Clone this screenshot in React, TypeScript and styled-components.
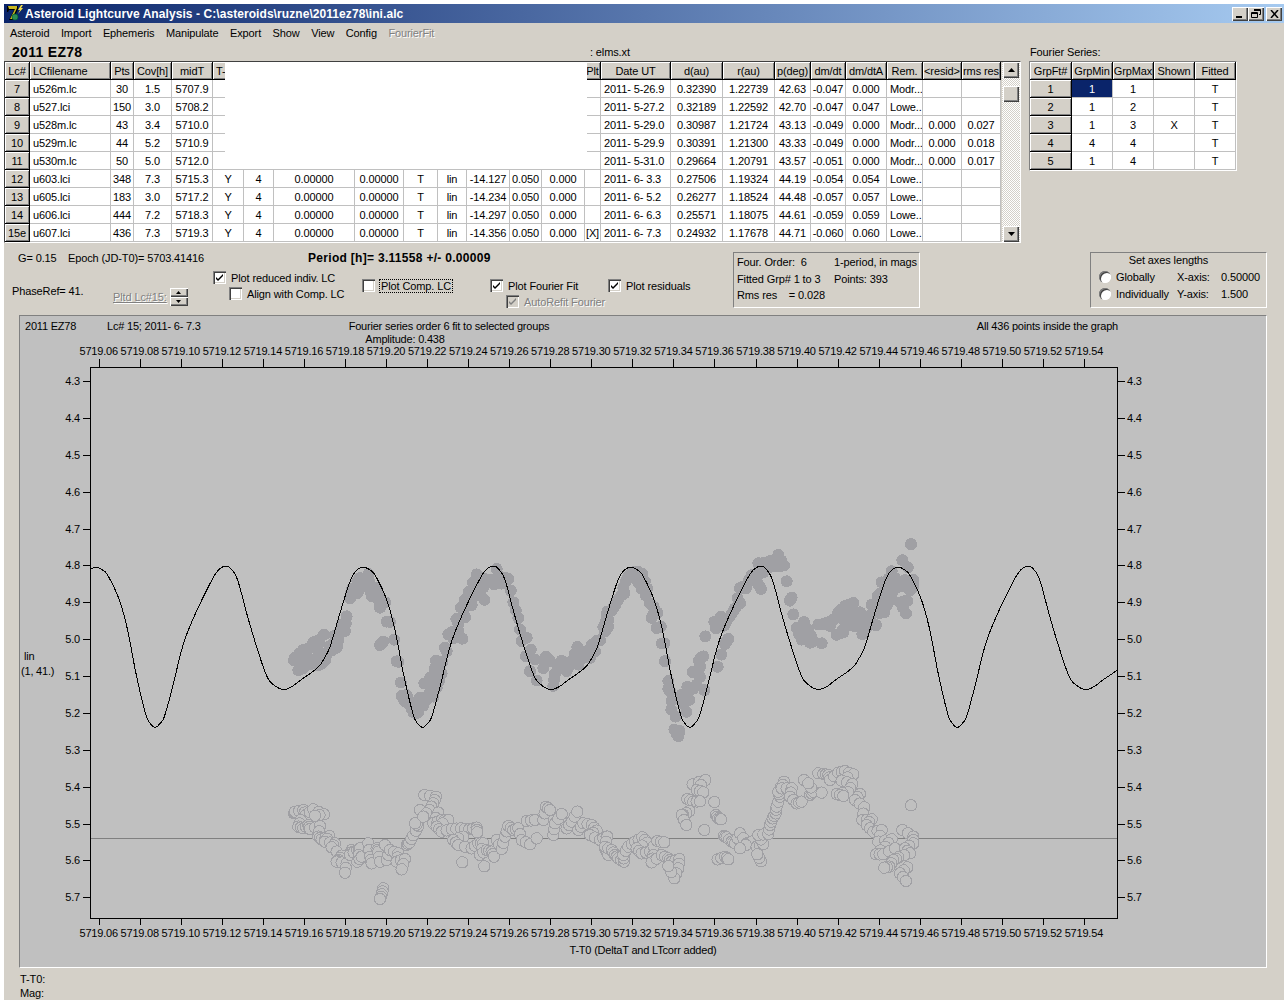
import styled, { createGlobalStyle, css } from 'styled-components';

const FONT = '"Liberation Sans", Arial, sans-serif';
const FACE = '#d4d0c8';
const PLOT_BG = '#c0c0c0';
const DOT = '#a0a0a4';

const GlobalStyle = createGlobalStyle`
  html, body {
    margin: 0;
    padding: 0;
    background: #fff;
  }
  body {
    font-family: ${FONT};
    font-size: 11px;
    letter-spacing: -0.12px;
    color: #000;
  }
`;

const Desktop = styled.div`
  padding: 4px 4px 0 4px;
  width: 1280px;
  height: 1000px;
`;

const Window = styled.div`
  display: flex;
  flex-direction: column;
  background: ${FACE};
  height: 997px;
  border-bottom: 1px solid #fff;
  box-sizing: border-box;
`;

const TitleBar = styled.div`
  display: flex;
  align-items: center;
  height: 19px;
  flex: none;
  background: linear-gradient(90deg, #0a246a 0%, #a6caf0 100%);
  padding: 0 2px 0 2px;
`;

const TitleText = styled.span`
  margin-left: 1px;
  color: #fff;
  font-weight: 700;
  font-size: 12px;
  letter-spacing: 0.07px;
  white-space: pre;
  flex: 1;
`;

const CaptionButton = styled.button<{ $gap?: number }>`
  width: 16px;
  height: 14px;
  padding: 0;
  margin-left: ${p => p.$gap ?? 0}px;
  border: 0;
  background: ${FACE};
  box-shadow: inset 1px 1px 0 #fff, inset -1px -1px 0 #404040, inset -2px -2px 0 #808080;
  display: flex;
  align-items: center;
  justify-content: center;
`;

const MenuBar = styled.div`
  display: flex;
  align-items: center;
  gap: 11.5px;
  height: 20px;
  flex: none;
  padding: 0 0 1px 6px;
  box-sizing: border-box;
`;

const MenuItem = styled.span<{ $off?: boolean }>`
  ${p => p.$off && css`
    color: #808080;
    text-shadow: 1px 1px 0 #fff;
  `}
`;

const CaptionRow = styled.div`
  display: grid;
  grid-template-columns: 578px 440px auto;
  align-items: center;
  height: 18px;
  flex: none;
  padding-left: 8px;
`;

const AsteroidName = styled.span`
  font-weight: 700;
  font-size: 14px;
  letter-spacing: 0.3px;
`;

const GridsRow = styled.div`
  display: flex;
  align-items: flex-start;
  height: 182px;
  flex: none;
`;

const GridFrame = styled.div`
  position: relative;
  display: flex;
  border-top: 1px solid #404040;
  border-left: 1px solid #404040;
  border-right: 1px solid #fff;
  border-bottom: 1px solid #fff;
`;

const DataGrid = styled.div<{ $cols: number[] }>`
  display: grid;
  grid-template-columns: ${p => p.$cols.map(c => `${c}px`).join(' ')};
  grid-auto-rows: 18px;
`;

const HeadCell = styled.div`
  box-sizing: border-box;
  background: ${FACE};
  border-right: 1px solid #000;
  border-bottom: 1px solid #000;
  box-shadow: inset 1px 1px 0 #fff, inset -1px -1px 0 #808080;
  display: flex;
  align-items: center;
  justify-content: center;
  white-space: nowrap;
  overflow: hidden;
`;

const LeftHeadCell = styled(HeadCell)`
  justify-content: flex-start;
  padding-left: 3px;
`;

const BodyCell = styled.div<{ $left?: boolean; $selected?: boolean }>`
  box-sizing: border-box;
  background: ${p => (p.$selected ? '#0a246a' : '#fff')};
  color: ${p => (p.$selected ? '#fff' : '#000')};
  border-right: 1px solid #c0c0c0;
  border-bottom: 1px solid #c0c0c0;
  display: flex;
  align-items: center;
  justify-content: ${p => (p.$left ? 'flex-start' : 'center')};
  padding-left: ${p => (p.$left ? '3px' : '0')};
  white-space: pre;
  overflow: hidden;
`;

const HiddenPatch = styled.div`
  position: absolute;
  left: 220px;
  top: 0;
  width: 362px;
  height: 107px;
  background: #fff;
`;

const ScrollBar = styled.div`
  display: flex;
  flex-direction: column;
  align-items: center;
  width: 18px;
  margin-left: 1px;
  background: repeating-conic-gradient(#fff 0 25%, ${FACE} 0 50%) 0 0 / 2px 2px;
`;

const ScrollButton = styled.div`
  box-sizing: border-box;
  width: 16px;
  height: 16px;
  background: ${FACE};
  box-shadow: inset 1px 1px 0 #fff, inset -1px -1px 0 #404040, inset -2px -2px 0 #808080;
  display: flex;
  align-items: center;
  justify-content: center;
  flex: none;
`;

const ScrollThumb = styled(ScrollButton)`
  margin-top: 8px;
`;

const ScrollGap = styled.div`
  flex: 1;
`;

const FourierFrame = styled.div`
  margin-left: 8px;
  border-top: 1px solid #808080;
  border-left: 1px solid #808080;
  border-right: 1px solid #fff;
  border-bottom: 1px solid #fff;
`;

const ControlBand = styled.div`
  display: flex;
  align-items: flex-start;
  height: 72px;
  flex: none;
`;

const ControlsLeft = styled.div`
  width: 729px;
  flex: none;
  display: flex;
  flex-direction: column;
`;

const TopInfo = styled.div`
  display: grid;
  grid-template-columns: 50px 240px auto;
  height: 27px;
  align-items: center;
  padding: 3px 0 0 14px;
  box-sizing: border-box;
`;

const PeriodText = styled.span`
  font-weight: 700;
  font-size: 12px;
  letter-spacing: 0.3px;
`;

const Options = styled.div`
  display: grid;
  grid-template-columns: 101px 100px 149px 128px 118px auto;
  padding-left: 8px;
`;

const OptionCol = styled.div<{ $top: number }>`
  display: flex;
  flex-direction: column;
  gap: 3px;
  padding-top: ${p => p.$top}px;
`;

const OptionLine = styled.label<{ $indent?: number; $off?: boolean }>`
  display: flex;
  align-items: center;
  height: 13px;
  gap: 5px;
  margin-left: ${p => p.$indent ?? 0}px;
  white-space: nowrap;
  ${p => p.$off && css`
    color: #808080;
    text-shadow: 1px 1px 0 #fff;
  `}
`;

const CheckFace = styled.span<{ $off?: boolean }>`
  box-sizing: border-box;
  width: 13px;
  height: 13px;
  flex: none;
  background: ${p => (p.$off ? FACE : '#fff')};
  box-shadow: inset 1px 1px 0 #808080, inset 2px 2px 0 #404040, inset -1px -1px 0 #fff, inset -2px -2px 0 ${FACE};
  display: flex;
  align-items: center;
  justify-content: center;
`;

const FocusText = styled.span`
  outline: 1px dotted #000;
  padding: 0 1px;
`;

const SpinWrap = styled.div`
  display: flex;
  align-items: center;
  gap: 3px;
  padding-top: 15px;
`;

const DisabledLabel = styled.span`
  color: #808080;
  text-shadow: 1px 1px 0 #fff;
  text-decoration: underline;
  white-space: nowrap;
`;

const SpinColumn = styled.div`
  display: flex;
  flex-direction: column;
`;

const SpinButton = styled(ScrollButton)`
  width: 18px;
  height: 9px;
`;

const PhaseLabel = styled.span`
  padding-top: 15px;
`;

const BevelBox = styled.div<{ $width: number; $left: number }>`
  box-sizing: border-box;
  width: ${p => p.$width}px;
  height: 56px;
  margin: 9px 0 0 ${p => p.$left}px;
  border-top: 1px solid #808080;
  border-left: 1px solid #808080;
  border-right: 1px solid #fff;
  border-bottom: 1px solid #fff;
  flex: none;
`;

const FitInfo = styled.div`
  display: grid;
  grid-template-columns: 97px auto;
  grid-auto-rows: 16.5px;
  align-items: center;
  padding: 1px 0 0 3px;
  white-space: pre;
`;

const AxesTitle = styled.div`
  text-align: center;
  padding: 0 20px 0 0;
  line-height: 14px;
`;

const AxesRows = styled.div`
  display: grid;
  grid-template-columns: 78px 44px auto;
  grid-auto-rows: 17px;
  align-items: center;
  padding: 1px 0 0 8px;
`;

const RadioLine = styled.label`
  display: flex;
  align-items: center;
  gap: 5px;
`;

const RadioDot = styled.span`
  width: 12px;
  height: 12px;
  border-radius: 50%;
  background: #fff;
  box-shadow: inset 1px 1px 0 #808080, inset 2px 2px 0 #404040, inset -1px -1px 0 #fff;
  flex: none;
`;

const PlotPanel = styled.div`
  box-sizing: border-box;
  width: 1248px;
  height: 653px;
  margin-left: 15px;
  flex: none;
  background: ${PLOT_BG};
  border-top: 1px solid #808080;
  border-left: 1px solid #808080;
  border-right: 1px solid #fff;
  border-bottom: 1px solid #fff;
`;

const PlotSvg = styled.svg`
  display: block;
  font-family: ${FONT};
  font-size: 11px;
  letter-spacing: -0.2px;
`;

const StatusLines = styled.div`
  display: flex;
  flex-direction: column;
  padding: 4px 0 0 16px;
  line-height: 14px;
`;

// one curve period, traced off the plot (page pixels)
const PERIOD = 267.4;
const KNOTS: [number, number][] = [
  [283.3, 689.5], [292, 686.5], [300, 680.5], [318.3, 667], [325, 657], [330, 646.7], [340, 613],
  [350, 581.7], [356, 571], [363.3, 567.3], [370, 570], [375, 575], [386.7, 600], [395, 630],
  [403.3, 673], [413.3, 715], [418, 724], [422.7, 727.3], [427, 724], [431.7, 716.7], [440, 686.7],
  [450, 646.7], [460, 620], [476.7, 585], [485, 571], [493.3, 566], [499, 569.5], [505, 580],
  [514, 613], [524, 646.7], [534.5, 676.7], [542, 685.5],
];

const allKnots: [number, number][] = [];
for (let k = -1; k <= 3; k++) {
  KNOTS.forEach(([x, y]) => allKnots.push([x + k * PERIOD, y]));
}

const curveY = (x: number) => {
  let i = 1;
  while (i < allKnots.length - 3 && allKnots[i + 1][0] < x) i++;
  const [x0, y0] = allKnots[i];
  const [x1, y1] = allKnots[i + 1];
  const m0 = (y1 - allKnots[i - 1][1]) / (x1 - allKnots[i - 1][0]);
  const m1 = (allKnots[i + 2][1] - y0) / (allKnots[i + 2][0] - x0);
  const h = x1 - x0;
  const t = (x - x0) / h;
  const t2 = t * t;
  const t3 = t2 * t;
  return (2 * t3 - 3 * t2 + 1) * y0 + (t3 - 2 * t2 + t) * h * m0 + (-2 * t3 + 3 * t2) * y1 + (t3 - t2) * h * m1;
};

const curvePoints = (() => {
  const pts: string[] = [];
  for (let x = 91; x <= 1117; x++) pts.push(`${x},${curveY(x).toFixed(1)}`);
  return pts.join(' ');
})();

const RES_LINE = 838.3;

// residual circles read from the plot, as [x, y] in two crops at 3x
const RES_A = [
  72,160, 75,155, 100,150, 108,165, 130,148, 162,163, 135,167, 92,180, 85,200, 100,205, 115,195, 120,207, 150,198,
  145,230, 155,238, 178,228, 165,245, 195,250, 185,262, 215,287, 205,300, 200,305, 230,310, 225,338, 245,270, 240,285,
  262,270, 270,265, 262,305, 275,290, 295,250, 300,290, 305,310, 320,265, 325,275, 330,305, 345,255, 350,300, 360,270,
  385,280, 380,305, 405,297, 395,328, 340,385, 335,403, 330,417, 410,255, 418,248, 430,226, 445,198, 435,190, 450,150,
  463,105, 498,110, 490,130, 478,150, 460,170, 505,158, 490,190, 515,180, 535,180, 500,200, 515,215, 545,207, 573,205,
  597,208, 620,203, 622,217, 580,230, 550,240, 565,255, 605,265, 625,250, 640,250, 630,285, 650,270, 665,275, 672,290,
  577,307, 643,319, 680,240, 695,267, 705,230, 715,198, 730,210, 745,205, 755,240, 780,253, 770,183, 795,180, 800,235,
  820,180, 828,140, 840,150, 850,225, 855,190, 875,162, 890,205, 905,185, 922,155, 925,210, 940,190, 965,195, 980,212,
  960,225, 990,240, 1010,230, 1005,265, 1015,285,
];
const RES_B = [
  22,230, 15,260, 35,270, 45,285, 55,295, 72,305, 70,285, 85,260, 105,245, 127,232, 142,248, 110,265, 125,280, 150,275,
  172,243, 193,247, 160,285, 155,307, 185,285, 205,295, 215,305, 238,297, 235,325, 223,355, 205,318, 278,73, 316,60,
  290,90, 310,97, 262,117, 280,125, 300,124, 343,126, 268,153, 250,165, 245,165, 259,195, 348,165, 355,175, 363,178,
  313,210, 372,228, 380,232, 395,245, 405,250, 420,220, 440,250, 455,245, 420,265, 470,260, 490,252, 475,225, 505,222,
  510,195, 518,175, 527,160, 530,138, 530,140, 540,110, 535,95, 552,65, 545,85, 575,85, 570,110, 590,130, 605,125,
  612,60, 630,105, 640,95, 625,70, 655,40, 665,98, 670,42, 685,45, 690,60, 715,38, 735,33, 760,43, 725,62, 757,72,
  745,97, 710,102, 730,108, 780,102, 765,120, 793,142, 787,180, 815,178, 800,195, 820,215, 845,210, 835,245, 875,238,
  855,260, 828,283, 850,283, 885,265, 907,210, 940,230, 940,250, 915,265, 930,280, 895,292, 880,300, 868,320, 853,323,
  922,322, 900,340, 918,363, 933,136, 353,298, 375,290, 385,298, 483,304, 472,283,
];

const toPage = (raw: number[], baseX: number) => {
  const out: [number, number][] = [];
  for (let i = 0; i < raw.length; i += 2) {
    out.push([baseX + raw[i] / 3, 760 + raw[i + 1] / 3]);
  }
  return out;
};

// fill in points between close neighbours, the plot has 436 of them
const thicken = (pts: [number, number][]) => {
  const out: [number, number][] = [];
  pts.forEach((p, i) => {
    out.push(p);
    const n = pts[i + 1];
    if (n && Math.hypot(n[0] - p[0], n[1] - p[1]) < 14) {
      out.push([(p[0] + n[0]) / 2, (p[1] + n[1]) / 2]);
    }
  });
  return out;
};

const residuals = thicken([...toPage(RES_A, 270), ...toPage(RES_B, 600)]);
const observed = residuals.map(([x, y]) => [x, curveY(x) + y - RES_LINE]);

const X_LABELS = Array.from({ length: 25 }, (_, i) => ({
  x: 98.7 + i * 41.05,
  label: (5719.06 + i * 0.02).toFixed(2),
}));
const Y_LABELS = Array.from({ length: 15 }, (_, i) => ({
  y: 381 + i * 36.88,
  label: (4.3 + i * 0.1).toFixed(1),
}));

const MAIN_COLS = [25, 81, 23, 38, 41, 31, 30, 81, 49, 34, 29, 43, 32, 43, 16, 70, 52, 52, 36, 35, 41, 36, 39, 39];
const MAIN_HEAD = ['Lc#', 'LCfilename', 'Pts', 'Cov[h]', 'midT', 'T-', '', '', '', '', '', '', '', '', 'Plt', 'Date UT', 'd(au)', 'r(au)', 'p(deg)', 'dm/dt', 'dm/dtA', 'Rem.', '<resid>', 'rms res'];
const LEFT_HEADS = [1, 5];

const early = (lc: string, file: string, pts: string, cov: string, mid: string, rest: string[]) => [
  lc, file, pts, cov, mid, '', '', '', '', '', '', '', '', '', '', ...rest,
];
const late = (lc: string, file: string, pts: string, cov: string, mid: string, inst: string, mark: string, rest: string[]) => [
  lc, file, pts, cov, mid, 'Y', '4', '0.00000', '0.00000', 'T', 'lin', inst, '0.050', '0.000', mark, ...rest,
];

const MAIN_ROWS = [
  early('7', 'u526m.lc', '30', '1.5', '5707.9', ['2011- 5-26.9', '0.32390', '1.22739', '42.63', '-0.047', '0.000', 'Modr...', '', '']),
  early('8', 'u527.lci', '150', '3.0', '5708.2', ['2011- 5-27.2', '0.32189', '1.22592', '42.70', '-0.047', '0.047', 'Lowe..', '', '']),
  early('9', 'u528m.lc', '43', '3.4', '5710.0', ['2011- 5-29.0', '0.30987', '1.21724', '43.13', '-0.049', '0.000', 'Modr...', '0.000', '0.027']),
  early('10', 'u529m.lc', '44', '5.2', '5710.9', ['2011- 5-29.9', '0.30391', '1.21300', '43.33', '-0.049', '0.000', 'Modr...', '0.000', '0.018']),
  early('11', 'u530m.lc', '50', '5.0', '5712.0', ['2011- 5-31.0', '0.29664', '1.20791', '43.57', '-0.051', '0.000', 'Modr...', '0.000', '0.017']),
  late('12', 'u603.lci', '348', '7.3', '5715.3', '-14.127', '', ['2011- 6- 3.3', '0.27506', '1.19324', '44.19', '-0.054', '0.054', 'Lowe..', '', '']),
  late('13', 'u605.lci', '183', '3.0', '5717.2', '-14.234', '', ['2011- 6- 5.2', '0.26277', '1.18524', '44.48', '-0.057', '0.057', 'Lowe..', '', '']),
  late('14', 'u606.lci', '444', '7.2', '5718.3', '-14.297', '', ['2011- 6- 6.3', '0.25571', '1.18075', '44.61', '-0.059', '0.059', 'Lowe..', '', '']),
  late('15e', 'u607.lci', '436', '7.3', '5719.3', '-14.356', '[X]', ['2011- 6- 7.3', '0.24932', '1.17678', '44.71', '-0.060', '0.060', 'Lowe..', '', '']),
];
// filename, Rem. and the date sit at the cell's left edge
const LEFT_COLUMNS = [1, 15, 21];

const FOURIER_COLS = [42, 41, 41, 41, 41];
const FOURIER_HEAD = ['GrpFt#', 'GrpMin', 'GrpMax', 'Shown', 'Fitted'];
const FOURIER_ROWS = [
  ['1', '1', '1', '', 'T'],
  ['2', '1', '2', '', 'T'],
  ['3', '1', '3', 'X', 'T'],
  ['4', '4', '4', '', 'T'],
  ['5', '1', '4', '', 'T'],
];

const AppIcon = () => (
  <svg width="18" height="17" viewBox="0 0 18 17">
    <path d="M1 1h11v3L7 15H3L8 5H3L2 7H1z" fill="#000" />
    <path d="M2 1h9v2L6 14H4L9 4H3z" fill="#c8b820" />
    <circle cx="9" cy="12" r="3" fill="#2e8b57" stroke="#063" strokeWidth="0.7" />
    <path d="M15 0l-3 5h2l-2 4 5-6h-2l2-3z" fill="#f4e04a" />
  </svg>
);

const Tick = ({ color = '#000' }: { color?: string }) => (
  <svg width="9" height="9" viewBox="0 0 9 9">
    <path d="M1 4l2 2 5-5v2L3 8 1 6z" fill={color} />
  </svg>
);

const Check = ({ checked, off }: { checked?: boolean; off?: boolean }) => (
  <CheckFace $off={off}>{checked && <Tick color={off ? '#808080' : '#000'} />}</CheckFace>
);

const Arrow = ({ up, size = 7 }: { up?: boolean; size?: number }) => (
  <svg width={size} height={Math.ceil(size / 2)} viewBox="0 0 7 4">
    <path d={up ? 'M3.5 0L7 4H0z' : 'M0 0h7L3.5 4z'} fill="#000" />
  </svg>
);

const App = () => (
  <>
    <GlobalStyle />
    <Desktop>
      <Window>
        <TitleBar>
          <AppIcon />
          <TitleText>{'Asteroid Lightcurve Analysis - C:\\asteroids\\ruzne\\2011ez78\\ini.alc'}</TitleText>
          <CaptionButton>
            <svg width="8" height="9" viewBox="0 0 8 9"><path d="M0 7h6v2H0z" fill="#000" /></svg>
          </CaptionButton>
          <CaptionButton>
            <svg width="10" height="9" viewBox="0 0 10 9">
              <path d="M3 .5h6.500v5H8M.5 3.500h6v5h-6zM3 1.500h6.500M.5 4.500h6" fill="none" stroke="#000" />
            </svg>
          </CaptionButton>
          <CaptionButton $gap={2}>
            <svg width="9" height="8" viewBox="0 0 9 8">
              <path d="M1 0l7 8M8 0L1 8" fill="none" stroke="#000" strokeWidth="1.500" />
            </svg>
          </CaptionButton>
        </TitleBar>

        <MenuBar>
          {['Asteroid', 'Import', 'Ephemeris', 'Manipulate', 'Export', 'Show', 'View', 'Config'].map(m => (
            <MenuItem key={m}>{m}</MenuItem>
          ))}
          <MenuItem $off>FourierFit</MenuItem>
        </MenuBar>

        <CaptionRow>
          <AsteroidName>2011 EZ78</AsteroidName>
          <span>: elms.xt</span>
          <span>Fourier Series:</span>
        </CaptionRow>

        <GridsRow>
          <GridFrame>
            <DataGrid $cols={MAIN_COLS}>
              {MAIN_HEAD.map((h, i) =>
                LEFT_HEADS.includes(i) ? <LeftHeadCell key={i}>{h}</LeftHeadCell> : <HeadCell key={i}>{h}</HeadCell>
              )}
              {MAIN_ROWS.map(row =>
                row.map((v, i) =>
                  i === 0 ? (
                    <HeadCell key={`${row[0]}-${i}`}>{v}</HeadCell>
                  ) : (
                    <BodyCell key={`${row[0]}-${i}`} $left={LEFT_COLUMNS.includes(i)}>{v}</BodyCell>
                  )
                )
              )}
            </DataGrid>
            <HiddenPatch />
            <ScrollBar>
              <ScrollButton><Arrow up /></ScrollButton>
              <ScrollThumb />
              <ScrollGap />
              <ScrollButton><Arrow /></ScrollButton>
            </ScrollBar>
          </GridFrame>

          <FourierFrame>
            <DataGrid $cols={FOURIER_COLS}>
              {FOURIER_HEAD.map(h => <HeadCell key={h}>{h}</HeadCell>)}
              {FOURIER_ROWS.map((row, r) =>
                row.map((v, i) =>
                  i === 0 ? (
                    <HeadCell key={`${r}-${i}`}>{v}</HeadCell>
                  ) : (
                    <BodyCell key={`${r}-${i}`} $selected={r === 0 && i === 1}>{v}</BodyCell>
                  )
                )
              )}
            </DataGrid>
          </FourierFrame>
        </GridsRow>

        <ControlBand>
          <ControlsLeft>
            <TopInfo>
              <span>G= 0.15</span>
              <span>Epoch (JD-T0)= 5703.41416</span>
              <PeriodText>Period [h]= 3.11558 +/- 0.00009</PeriodText>
            </TopInfo>
            <Options>
              <PhaseLabel>PhaseRef= 41.</PhaseLabel>
              <SpinWrap>
                <DisabledLabel>Pltd Lc#15:</DisabledLabel>
                <SpinColumn>
                  <SpinButton><Arrow up size={5} /></SpinButton>
                  <SpinButton><Arrow size={5} /></SpinButton>
                </SpinColumn>
              </SpinWrap>
              <OptionCol $top={1}>
                <OptionLine><Check checked />Plot reduced indiv. LC</OptionLine>
                <OptionLine $indent={16}><Check />Align with Comp. LC</OptionLine>
              </OptionCol>
              <OptionCol $top={9}>
                <OptionLine><Check /><FocusText>Plot Comp. LC</FocusText></OptionLine>
              </OptionCol>
              <OptionCol $top={9}>
                <OptionLine><Check checked />Plot Fourier Fit</OptionLine>
                <OptionLine $indent={16} $off><Check checked off />AutoRefit Fourier</OptionLine>
              </OptionCol>
              <OptionCol $top={9}>
                <OptionLine><Check checked />Plot residuals</OptionLine>
              </OptionCol>
            </Options>
          </ControlsLeft>

          <BevelBox $width={187} $left={0}>
            <FitInfo>
              <span>Four. Order:  6</span>
              <span>1-period, in mags</span>
              <span>Fitted Grp# 1 to 3</span>
              <span>Points: 393</span>
              <span>Rms res    = 0.028</span>
            </FitInfo>
          </BevelBox>

          <BevelBox $width={177} $left={170}>
            <AxesTitle>Set axes lengths</AxesTitle>
            <AxesRows>
              <RadioLine><RadioDot />Globally</RadioLine>
              <span>X-axis:</span>
              <span>0.50000</span>
              <RadioLine><RadioDot />Individually</RadioLine>
              <span>Y-axis:</span>
              <span>1.500</span>
            </AxesRows>
          </BevelBox>
        </ControlBand>

        <PlotPanel>
          <PlotSvg width="1246" height="651" viewBox="20 316 1246 651">
            <text x="25" y="330">2011 EZ78</text>
            <text x="107" y="330">Lc# 15; 2011- 6- 7.3</text>
            <text x="449" y="330" textAnchor="middle">Fourier series order 6 fit to selected groups</text>
            <text x="405" y="343" textAnchor="middle">Amplitude: 0.438</text>
            <text x="1118" y="330" textAnchor="end">All 436 points inside the graph</text>
            <text x="24" y="660">lin</text>
            <text x="21" y="675">(1, 41.)</text>

            <path d="M90.500 367V918.500H1117.500V367H90.500" fill="none" stroke="#000" shapeRendering="crispEdges" />

            {X_LABELS.map(t => (
              <g key={t.label}>
                <text x={t.x} y="355" textAnchor="middle">{t.label}</text>
                <text x={t.x} y="937" textAnchor="middle">{t.label}</text>
                <path d={`M${Math.round(t.x) + 0.5} 359V367M${Math.round(t.x) + 0.5} 918V925`} stroke="#000" shapeRendering="crispEdges" />
              </g>
            ))}
            {Y_LABELS.map(t => (
              <g key={t.label}>
                <text x="80" y={t.y + 4} textAnchor="end">{t.label}</text>
                <text x="1127" y={t.y + 4}>{t.label}</text>
                <path d={`M83 ${Math.round(t.y) + 0.5}H90M1118 ${Math.round(t.y) + 0.5}H1125`} stroke="#000" shapeRendering="crispEdges" />
              </g>
            ))}
            <text x="643" y="954" textAnchor="middle">T-T0 (DeltaT and LTcorr added)</text>

            <path d={`M91 ${RES_LINE + 0.2}H1117`} stroke="#808080" shapeRendering="crispEdges" />
            {residuals.map(([x, y], i) => (
              <circle key={i} cx={x} cy={y} r="5.700" fill={PLOT_BG} stroke={DOT} shapeRendering="crispEdges" />
            ))}
            {observed.map(([x, y], i) => (
              <circle key={i} cx={x} cy={y} r="6" fill={DOT} shapeRendering="crispEdges" />
            ))}
            <polyline points={curvePoints} fill="none" stroke="#000" strokeWidth="1" shapeRendering="crispEdges" />
          </PlotSvg>
        </PlotPanel>

        <StatusLines>
          <span>T-T0:</span>
          <span>Mag:</span>
        </StatusLines>
      </Window>
    </Desktop>
  </>
);

export default App;
